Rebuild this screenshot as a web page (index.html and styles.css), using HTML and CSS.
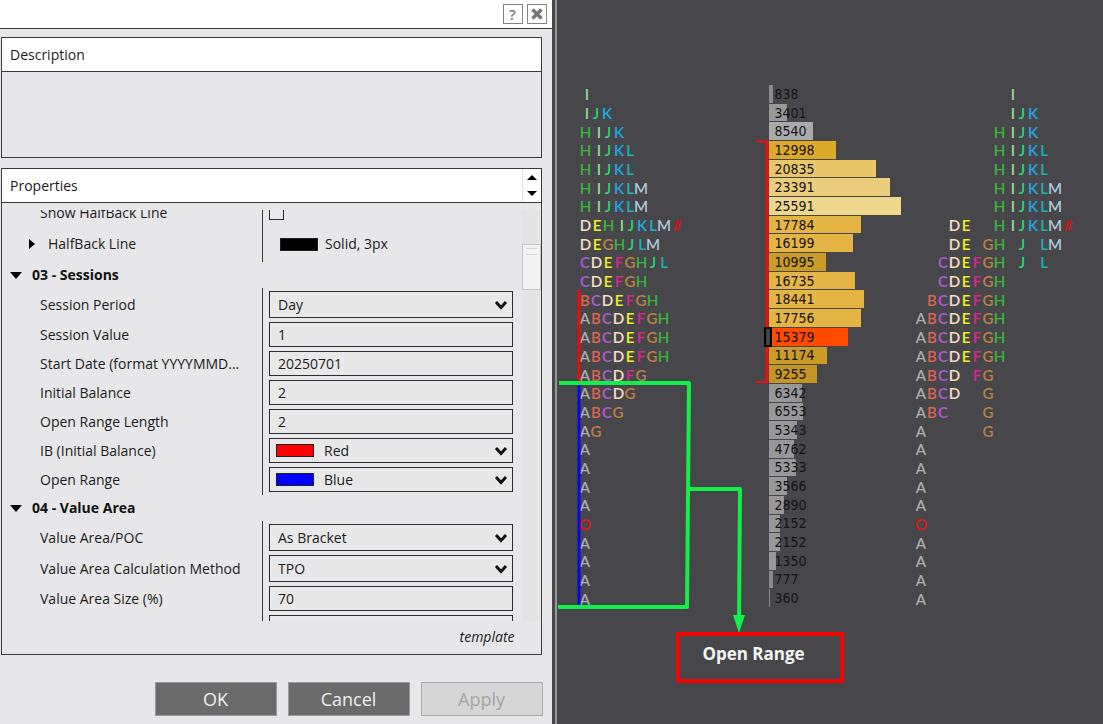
FILE: index.html
```html
<!DOCTYPE html>
<html lang="en">
<head>
<meta charset="utf-8">
<title>Indicator Properties</title>
<link rel="stylesheet" href="styles.css">
</head>
<body>
<main class="app">
  <section class="dialog">
    <header class="titlebar">
      <button class="title-btn" type="button" aria-label="Help">?</button>
      <button class="title-btn" type="button" aria-label="Close"><svg width="14" height="14" viewBox="0 0 14 14"><path d="M2.5 2.5L11.5 11.5M11.5 2.5L2.5 11.5" stroke="#77777a" stroke-width="3.4"/></svg></button>
    </header>
    <div class="dialog-body">
      <section class="box description">
        <h2 class="box-head">Description</h2>
        <div class="description-text"></div>
      </section>
      <section class="box properties">
        <div class="box-head">
          <h2 class="box-title">Properties</h2>
          <div class="stepper">
            <button type="button" class="step" aria-label="Collapse"><svg width="10" height="5"><path d="M0 5L5 0L10 5Z"/></svg></button>
            <button type="button" class="step" aria-label="Expand"><svg width="10" height="5"><path d="M0 0L5 5L10 0Z"/></svg></button>
          </div>
        </div>
        <div class="list">
          <div class="list-items">
            <div class="group group-scrolled">
              <div class="row"><label class="name" for="hb">Show HalfBack Line</label><div class="cell"><input class="check" type="checkbox" id="hb"></div></div>
              <div class="row row-tall"><span class="name name-sub"><svg class="expander" width="6" height="10"><path d="M0 0L6 5L0 10Z"/></svg>HalfBack Line</span><div class="cell line-value"><span class="swatch black"></span>Solid, 3px</div></div>
            </div>
            <h3 class="group-head"><svg width="12" height="7"><path d="M0 0H12L6 7Z"/></svg>03 - Sessions</h3>
            <div class="group">
              <div class="row row-select"><label class="name" for="sp">Session Period</label><div class="cell"><select class="field" id="sp"><option>Day</option></select><svg class="chev" width="14" height="10"><path d="M2 2L7 7.5L12 2"/></svg></div></div>
              <div class="row"><label class="name" for="sv">Session Value</label><div class="cell"><input class="field" id="sv" value="1"></div></div>
              <div class="row"><label class="name" for="sd">Start Date (format YYYYMMD...</label><div class="cell"><input class="field" id="sd" value="20250701"></div></div>
              <div class="row"><label class="name" for="ib">Initial Balance</label><div class="cell"><input class="field" id="ib" value="2"></div></div>
              <div class="row"><label class="name" for="orl">Open Range Length</label><div class="cell"><input class="field" id="orl" value="2"></div></div>
              <div class="row"><label class="name" for="ibc">IB (Initial Balance)</label><div class="cell"><select class="field field-color" id="ibc"><option>Red</option></select><span class="swatch swatch-in red"></span><svg class="chev" width="14" height="10"><path d="M2 2L7 7.5L12 2"/></svg></div></div>
              <div class="row"><label class="name" for="orc">Open Range</label><div class="cell"><select class="field field-color" id="orc"><option>Blue</option></select><span class="swatch swatch-in blue"></span><svg class="chev" width="14" height="10"><path d="M2 2L7 7.5L12 2"/></svg></div></div>
            </div>
            <h3 class="group-head"><svg width="12" height="7"><path d="M0 0H12L6 7Z"/></svg>04 - Value Area</h3>
            <div class="group">
              <div class="row row-select"><label class="name" for="va">Value Area/POC</label><div class="cell"><select class="field" id="va"><option>As Bracket</option></select><svg class="chev" width="14" height="10"><path d="M2 2L7 7.5L12 2"/></svg></div></div>
              <div class="row row-select"><label class="name" for="vm">Value Area Calculation Method</label><div class="cell"><select class="field" id="vm"><option>TPO</option></select><svg class="chev" width="14" height="10"><path d="M2 2L7 7.5L12 2"/></svg></div></div>
              <div class="row"><label class="name" for="vs">Value Area Size (%)</label><div class="cell"><input class="field" id="vs" value="70"></div></div>
              <div class="row"><span class="name"></span><div class="cell"><input class="field" aria-label="Next value"></div></div>
            </div>
          </div>
          <div class="scrollbar"><div class="thumb"></div></div>
        </div>
        <div class="template"><a class="template-link" href="#">template</a></div>
      </section>
    </div>
    <footer class="actions">
      <button class="action" type="button">OK</button>
      <button class="action" type="button">Cancel</button>
      <button class="action" type="button" disabled>Apply</button>
    </footer>
  </section>
  <section class="chart">
    <div class="plot">
      <div class="tpo" id="collapsed"></div>
      <div class="volume" id="volume"></div>
      <div class="tpo" id="split"></div>
    </div>
    <svg class="marks" width="320" height="660" viewBox="0 0 320 660">
      <path d="M28 290V382" stroke="#e80c0c" stroke-width="3"/>
      <path d="M28 385V605" stroke="#0808e0" stroke-width="3"/>
      <path d="M205 141.500H216V382H205" fill="none" stroke="#ec1010" stroke-width="2"/>
      <path d="M216 141V382" stroke="#ec1010" stroke-width="3"/>
      <rect x="214" y="328" width="6" height="18" fill="#444" stroke="#000" stroke-width="2"/>
      <g fill="none" stroke="#10f048" stroke-width="4" stroke-linejoin="round">
        <path d="M8 383H138L136 607H7"/>
        <path d="M137 489H189L188 620"/>
      </g>
      <path d="M182 615H194L188 633Z" fill="#10f048"/>
    </svg>
    <div class="callout">Open Range</div>
  </section>
</main>
<script src="chart.js"></script>
</body>
</html>
```
FILE: styles.css
```css
* { box-sizing: border-box; }
body { margin: 0; font-family: "Open Sans", "Noto Sans", sans-serif; font-size: 14px; line-height: 20px; color: #1c1c20; }
button, input, select { font: inherit; color: inherit; margin: 0; }
h2, h3 { margin: 0; font-size: 14px; }
h2 { font-weight: 400; }
.app { display: flex; min-height: 100vh; background: #47464b; }

.dialog { flex: 0 0 50%; display: flex; flex-direction: column; height: 100vh; background: #e7e7e9; }
.titlebar { display: flex; justify-content: flex-end; gap: 4px; height: 29px; padding: 4px 5px 0 0; background: #fff; border-bottom: 1px solid #3a3a3e; }
.title-btn { display: flex; align-items: center; justify-content: center; width: 20px; height: 20px; padding: 0; background: #fff; border: 1px solid #858588; color: #77777a; font-size: 15px; font-weight: 600; }
.dialog-body { flex: 1; min-height: 0; display: flex; flex-direction: column; gap: 10px; padding: 8px 10px 0 1px; }
.box { border: 1px solid #3a3a3e; }
.box-head { display: flex; align-items: center; height: 34px; padding-left: 8px; background: #fff; border-bottom: 1px solid #3a3a3e; }
.box-title { flex: 1; }
.description { flex: 0 0 121px; }
.stepper { display: flex; flex-direction: column; justify-content: center; gap: 11px; width: 19px; height: 33px; border-left: 1px solid #e2e2e4; align-items: center; }
.step { display: flex; padding: 0; border: 0; background: none; }
.properties { flex: 1; min-height: 0; display: flex; flex-direction: column; }
.list { flex: 1; min-height: 0; display: flex; margin-top: 7px; overflow: hidden; }
.list-items { flex: 1; padding-right: 9px; }
.scrollbar { width: 19px; padding-top: 34px; background: #e4e4e5; }
.thumb { height: 46px; background: #f3f3f4; border: 1px solid #c6c6c8; }
.thumb::before { content: ""; display: block; height: 5px; margin: 3px 3px 0; border-top: 1px solid #d6d6d8; border-bottom: 1px solid #d6d6d8; }
.group { display: flex; flex-direction: column; gap: 4px; padding: 3px 0; background: linear-gradient(#3a3a3e, #3a3a3e) 260px 0 / 1px 100% no-repeat; }
.group-scrolled { margin-top: -13px; }
.group-head { display: flex; align-items: center; gap: 10px; height: 26px; padding-left: 8px; font-weight: 700; color: #111; }
.row { display: flex; height: 25px; align-items: center; }
.row-select { height: 27px; }
.row-tall { height: 30px; }
.name { flex: 0 0 267px; padding-left: 38px; white-space: nowrap; }
.name-sub { display: flex; align-items: center; gap: 13px; padding-left: 27px; }
.cell { position: relative; flex: 1; display: flex; align-items: center; align-self: stretch; }
.line-value { gap: 7px; padding-left: 11px; }
.check { appearance: none; width: 15px; height: 15px; border: 1px solid #2c2c30; background: #e9e9ea; }
.field { appearance: none; width: 100%; height: 100%; padding: 0 8px; border: 1px solid #2c2c30; border-radius: 0; background: #e8e8e9; outline: 0; }
.field-color { padding-left: 54px; }
.chev { position: absolute; right: 5px; fill: none; stroke: #111; stroke-width: 3; }
.swatch { width: 38px; height: 13px; border: 1px solid #222; }
.swatch-in { position: absolute; left: 7px; }
.black { background: #000; }
.red { background: #f00; }
.blue { background: #00f; }
.template { display: flex; justify-content: flex-end; height: 33px; padding: 6px 26px 0 0; }
.template-link { color: inherit; font-style: italic; text-decoration: none; }
.actions { display: flex; justify-content: flex-end; gap: 11px; padding: 27px 9px 8px 0; }
.action { width: 122px; height: 34px; padding: 0; background: #6b6b6b; border: 1px solid #9a9a9a; color: #f0f0f0; font-size: 18px; }
.action:disabled { background: #d6d6d7; border-color: #aaa; color: #a4a4a6; }

.chart { position: relative; flex: 1; padding: 85px 0 0 25px; border-left: 3px solid #47464b; box-shadow: inset 2px 0 #98989a; }
.plot { display: grid; grid-template-columns: 189px 147px 1fr; height: 523px; line-height: 16px; }
.tpo, .volume { display: grid; grid-template-rows: repeat(28, 1fr); }
.tpo-row { display: flex; align-items: center; font-family: Lato, "Open Sans", sans-serif; font-size: 15px; font-weight: 600; }
.tpo-cell { width: 11px; display: flex; justify-content: center; white-space: pre; }
.c-D, .c-H { width: 12px; }
.c-A { color: #adadb0; }
.c-B { color: #d9654f; }
.c-C { color: #ae5fce; }
.c-D { color: #f8dfc6; }
.c-E { color: #eeee22; }
.c-F { color: #d8268f; }
.c-G { color: #bd8145; }
.c-H { color: #38b53a; }
.c-I { color: #93dd93; padding-left: 4px; }
.c-J { color: #22d873; }
.c-K { color: #20a7e2; }
.c-L { color: #20b2b0; }
.c-M { color: #aecbd8; }
.c-O { color: #e01414; }
.c-mark { width: 15px; color: #d01212; font-style: italic; }
.vol-row { display: flex; align-items: center; padding-bottom: 1px; }
.bar { align-self: stretch; display: flex; align-items: center; padding-left: 6px; color: #141414; font-family: "DejaVu Sans Condensed", "DejaVu Sans", sans-serif; font-size: 14px; white-space: nowrap; background: #98989a; }
.bar-light { background: #aaaaac; }
.bar-thin { background: linear-gradient(#8a8a8d, #8a8a8d) 0 0 / 4px 100% no-repeat; }
.bar-line { background-size: 1px 100%; }
.g1 { background: #c39524; }
.g2 { background: #ca9b26; }
.g3 { background: #dca929; }
.g4 { background: #e4b544; }
.g5 { background: #e9c668; }
.g6 { background: #ebcd7b; }
.g7 { background: #eed68c; }
.poc { background: #ff4a00; }
.marks { position: absolute; left: -4px; top: 0; }
.callout { position: absolute; left: 121px; top: 632px; width: 168px; height: 51px; padding-top: 6px; padding-right: 12px; border: 4px solid #f00404; color: #f4f4f4; font-size: 17px; line-height: 24px; font-weight: 700; text-align: center; }
```
FILE: chart.js
```js
const levels = [
  ["I", 838, "bar-thin", "        I"],
  ["IJK", 3401, "", "        IJK"],
  ["HIJK", 8540, "bar-light", "       HIJK"],
  ["HIJKL", 12998, "g3", "       HIJKL"],
  ["HIJKL", 20835, "g5", "       HIJKL"],
  ["HIJKLM", 23391, "g6", "       HIJKLM"],
  ["HIJKLM", 25591, "g7", "       HIJKLM"],
  ["DEHIJKLM#", 17784, "g4", "   DE  HIJKLM#"],
  ["DEGHJLM", 16199, "g4", "   DE GH J LM"],
  ["CDEFGHJL", 10995, "g2", "  CDEFGH J L"],
  ["CDEFGH", 16735, "g4", "  CDEFGH"],
  ["BCDEFGH", 18441, "g4", " BCDEFGH"],
  ["ABCDEFGH", 17756, "g4", "ABCDEFGH"],
  ["ABCDEFGH", 15379, "poc", "ABCDEFGH"],
  ["ABCDEFGH", 11174, "g2", "ABCDEFGH"],
  ["ABCDFG", 9255, "g1", "ABCD FG"],
  ["ABCDG", 6342, "", "ABCD  G"],
  ["ABCG", 6553, "", "ABC   G"],
  ["AG", 5343, "", "A     G"],
  ["A", 4762, "", "A"],
  ["A", 5333, "", "A"],
  ["A", 3566, "", "A"],
  ["A", 2890, "", "A"],
  ["O", 2152, "", "O"],
  ["A", 2152, "", "A"],
  ["A", 1350, "", "A"],
  ["A", 777, "bar-thin", "A"],
  ["A", 360, "bar-thin bar-line", "A"]
];

const columns = "ABCDEFGHIJKLM";

function letterRow(text, split) {
  const cells = [...text].map((ch, i) => {
    if (ch === " ") {
      const wide = split && (columns[i] === "D" || columns[i] === "H");
      return `<span class="tpo-cell${wide ? " c-D" : ""}"> </span>`;
    }
    return `<span class="tpo-cell c-${ch === "#" ? "mark" : ch}">${ch}</span>`;
  });
  return `<div class="tpo-row">${cells.join("")}</div>`;
}

document.getElementById("collapsed").innerHTML = levels.map(l => letterRow(l[0], false)).join("");
document.getElementById("split").innerHTML = levels.map(l => letterRow(l[3], true)).join("");
document.getElementById("volume").innerHTML = levels.map(l =>
  `<div class="vol-row"><div class="bar ${l[2]}" style="width:${Math.max(1, Math.round(l[1] / 194))}px">${l[1]}</div></div>`
).join("");
```
